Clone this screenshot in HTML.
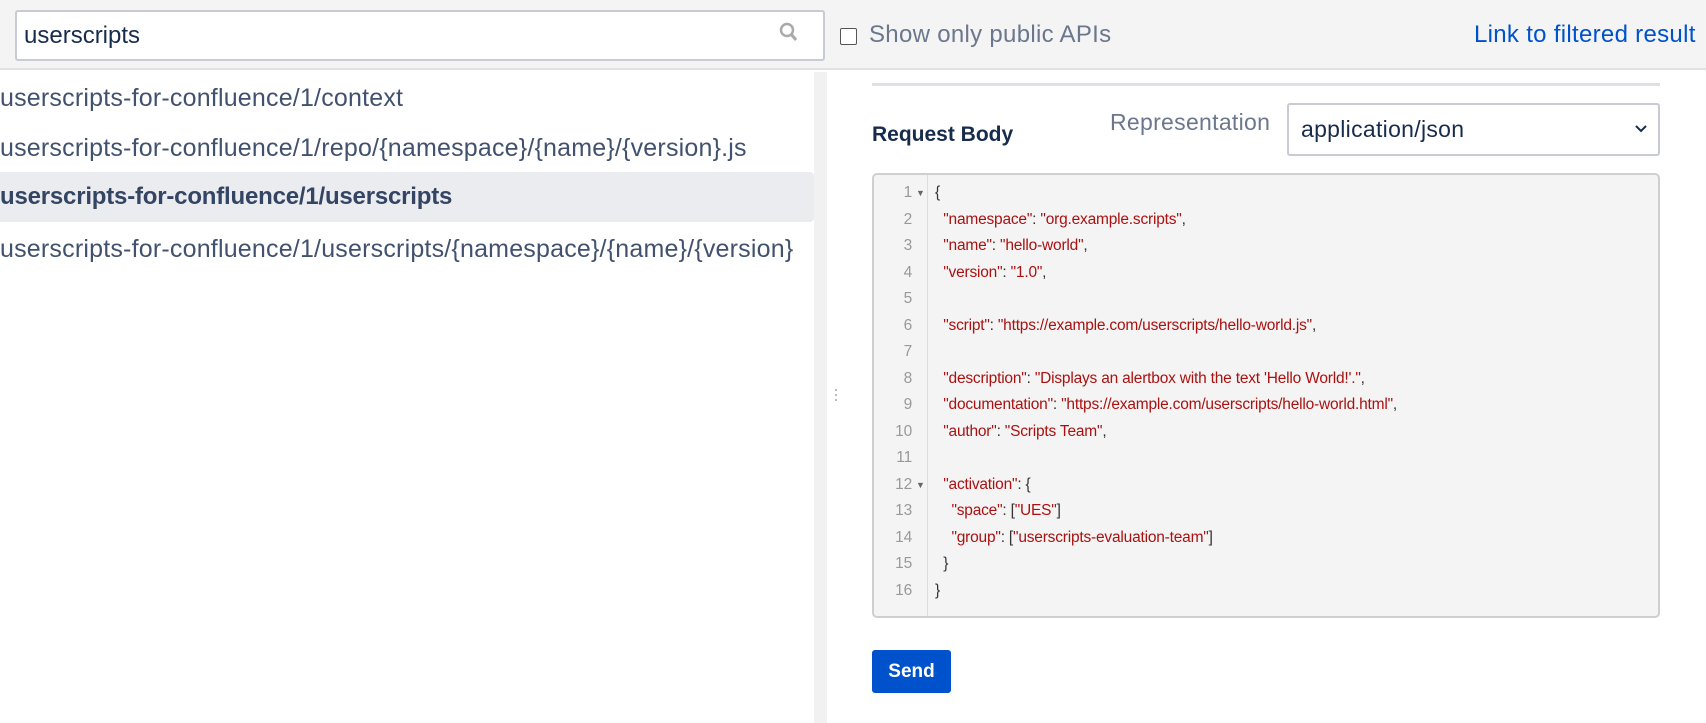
<!DOCTYPE html>
<html><head><meta charset="utf-8"><style>
*{box-sizing:border-box;margin:0;padding:0}
body{width:1706px;height:723px;overflow:hidden;background:#fff;font-family:"Liberation Sans",sans-serif;position:relative;color:#172b4d}
.hdr{position:absolute;left:0;top:0;width:1706px;height:70px;background:#f4f4f4;border-bottom:2px solid #e1e1e4}
.search{position:absolute;left:15px;top:10px;width:810px;height:51px;background:#fff;border:2px solid #c8cbd3;border-radius:3px;font-size:24px;line-height:47px;padding-left:7px;color:#172b4d}
.cb{position:absolute;left:840px;top:28px;width:17px;height:17px;border:1.5px solid #555;border-radius:2px;background:#fff}
.pub{position:absolute;left:869px;top:21px;font-size:24px;color:#6b778c;letter-spacing:0.3px}
.link{position:absolute;left:1474px;top:21px;font-size:24px;color:#0052cc;white-space:nowrap;letter-spacing:0.3px}
.list div{position:absolute;left:0;font-size:25px;letter-spacing:0.2px;color:#42526e;white-space:nowrap;height:50px;line-height:50px}
.list .sel{background:#ebecf0;width:814px;border-radius:0 4px 4px 0;font-weight:bold;color:#344563;letter-spacing:-0.2px;font-size:24px}
.sb{position:absolute;left:814px;top:72px;width:13px;height:651px;background:#f1f1f1}
.dots{position:absolute;left:835px;top:389px;width:2px}
.dots i{display:block;width:2px;height:2px;background:#bbb;margin-bottom:3px}
.hr{position:absolute;left:872px;top:83px;width:788px;height:3px;background:#dfe1e6}
.rb{position:absolute;left:872px;top:123px;font-size:21px;font-weight:bold;color:#172b4d}
.rep{position:absolute;left:1110px;top:109px;font-size:23px;color:#6b778c;letter-spacing:0.3px}
.selc{position:absolute;left:1287px;top:103px;width:373px;height:53px;border:2px solid #c8cbd3;border-radius:3px;background:#fff;font-size:23px;line-height:49px;padding-left:12px;color:#172b4d;letter-spacing:0.3px}
.selc svg{position:absolute;right:10px;top:19px}
.ed{position:absolute;left:872px;top:173px;width:788px;height:445px;background:#f4f4f4;border:2px solid #cfcfcf;border-radius:5px;overflow:hidden}
.gut{position:absolute;left:0;top:0;width:54px;height:100%;border-right:1px solid #ddd}
.code{position:absolute;left:0;top:5px;font-family:"Liberation Sans",Arial,sans-serif;font-size:15.5px;letter-spacing:-0.2px}
.ln{height:26.5px;line-height:26.5px;position:relative;white-space:pre}
.n{position:absolute;left:0;width:38px;text-align:right;color:#999}
.ar{position:absolute;left:42px;font-size:9px;color:#666}
.t{position:absolute;left:61px;color:#333}
.s{color:#a11}
.btn{position:absolute;left:872px;top:650px;width:79px;height:43px;background:#0052cc;border-radius:3px;color:#fff;font-weight:bold;font-size:19px;text-align:center;line-height:43px}
</style></head><body>
<div class="hdr">
<div class="search">userscripts
<svg style="position:absolute;right:24px;top:10px" width="20" height="22" viewBox="0 0 20 22"><circle cx="8" cy="8" r="6" fill="none" stroke="#aaa" stroke-width="2.5"/><path d="M12 12l5 6" stroke="#aaa" stroke-width="3"/></svg></div>
<div class="cb"></div><div class="pub">Show only public APIs</div>
<div class="link">Link to filtered result</div>
</div>
<div class="list">
<div style="top:73px">userscripts-for-confluence/1/context</div>
<div style="top:123px">userscripts-for-confluence/1/repo/{namespace}/{name}/{version}.js</div>
<div class="sel" style="top:172px">userscripts-for-confluence/1/userscripts</div>
<div style="top:224px">userscripts-for-confluence/1/userscripts/{namespace}/{name}/{version}</div>
</div>
<div class="sb"></div>
<div class="dots"><i></i><i></i><i></i></div>
<div class="hr"></div>
<div class="rb">Request Body</div>
<div class="rep">Representation</div>
<div class="selc">application/json<svg width="14" height="10" viewBox="0 0 14 10"><path d="M2 2l5 5 5-5" fill="none" stroke="#172b4d" stroke-width="2"/></svg></div>
<div class="ed"><div class="gut"></div>
<div class="code">
<div class="ln"><span class="n">1</span><span class="ar">▼</span><span class="t">{</span></div>
<div class="ln"><span class="n">2</span><span class="t">  <span class="s">"namespace"</span>: <span class="s">"org.example.scripts"</span>,</span></div>
<div class="ln"><span class="n">3</span><span class="t">  <span class="s">"name"</span>: <span class="s">"hello-world"</span>,</span></div>
<div class="ln"><span class="n">4</span><span class="t">  <span class="s">"version"</span>: <span class="s">"1.0"</span>,</span></div>
<div class="ln"><span class="n">5</span></div>
<div class="ln"><span class="n">6</span><span class="t">  <span class="s">"script"</span>: <span class="s">"https://example.com/userscripts/hello-world.js"</span>,</span></div>
<div class="ln"><span class="n">7</span></div>
<div class="ln"><span class="n">8</span><span class="t">  <span class="s">"description"</span>: <span class="s">"Displays an alertbox with the text 'Hello World!'."</span>,</span></div>
<div class="ln"><span class="n">9</span><span class="t">  <span class="s">"documentation"</span>: <span class="s">"https://example.com/userscripts/hello-world.html"</span>,</span></div>
<div class="ln"><span class="n">10</span><span class="t">  <span class="s">"author"</span>: <span class="s">"Scripts Team"</span>,</span></div>
<div class="ln"><span class="n">11</span></div>
<div class="ln"><span class="n">12</span><span class="ar">▼</span><span class="t">  <span class="s">"activation"</span>: {</span></div>
<div class="ln"><span class="n">13</span><span class="t">    <span class="s">"space"</span>: [<span class="s">"UES"</span>]</span></div>
<div class="ln"><span class="n">14</span><span class="t">    <span class="s">"group"</span>: [<span class="s">"userscripts-evaluation-team"</span>]</span></div>
<div class="ln"><span class="n">15</span><span class="t">  }</span></div>
<div class="ln"><span class="n">16</span><span class="t">}</span></div>
</div></div>
<div class="btn">Send</div>
</body></html>
